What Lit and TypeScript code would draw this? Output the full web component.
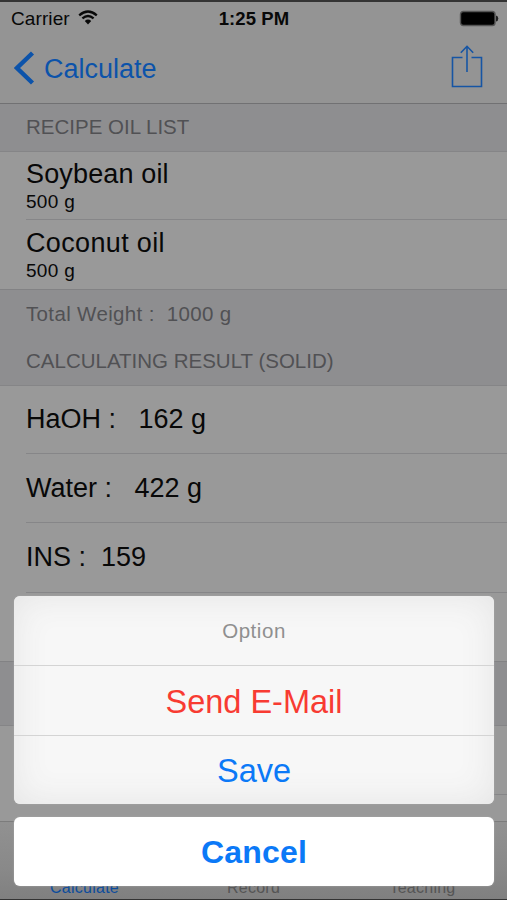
import { LitElement, html, css } from "lit";
import { customElement } from "lit/decorators.js";

@customElement("app-root")
export class AppRoot extends LitElement {
  static styles = css`
    :host {
      display: block;
      position: relative;
      width: 507px;
      height: 900px;
      overflow: hidden;
      box-sizing: border-box;
      font-family: "Liberation Sans", Arial, sans-serif;
      background: #999;
      color: #080808;
    }
    .screen {
      display: flex;
      flex-direction: column;
      height: 900px;
      box-sizing: border-box;
      border-top: 2px solid #343434;
      border-bottom: 1px solid #343434;
    }
    .top {
      height: 102px;
      box-sizing: border-box;
      flex: none;
      background: #949494;
      border-bottom: 1px solid #717173;
    }
    .status {
      display: grid;
      grid-template-columns: 1fr auto 1fr;
      align-items: center;
      height: 33px;
      padding: 0 8px 0 11px;
      font-size: 19px;
    }
    .carrier { display: flex; align-items: center; gap: 8px; letter-spacing: 0.1px; }
    .carrier svg { margin-bottom: 2px; }
    .time { font-weight: bold; font-size: 18.5px; letter-spacing: 0.1px; padding-right: 2px; }
    .battery { justify-self: end; }
    .nav {
      display: flex;
      align-items: center;
      justify-content: space-between;
      height: 68px;
      padding: 0 24px 2px 14px;
      box-sizing: border-box;
    }
    .back {
      display: flex;
      align-items: center;
      gap: 9px;
      font-size: 27px;
      color: #0c53aa;
    }
    .back span { padding-top: 2px; }
    .share { margin-bottom: 4px; }
    svg { display: block; }
    .group {
      flex: none;
      box-sizing: border-box;
      background: #8e8e90;
      border-bottom: 1px solid #858587;
      color: #515154;
      font-size: 20.5px;
      padding-left: 26px;
    }
    .line { display: flex; align-items: center; height: 47px; padding-bottom: 1px; box-sizing: border-box; white-space: pre; }
    .total { letter-spacing: 0.35px; height: 48px; }
    .mid { border-top: 1px solid #828284; }
    .spacer { height: 65px; }
    .row {
      flex: none;
      box-sizing: border-box;
      margin-left: 26px;
      border-bottom: 1px solid #868688;
      font-size: 27px;
      display: flex;
      flex-direction: column;
      justify-content: center;
      white-space: pre;
    }
    .h68 { height: 68px; }
    .h69 { height: 69px; }
    .h70 { height: 70px; }
    .last { border-bottom: 0; }
    .pair { padding-top: 4px; }
    .oil { line-height: 29px; letter-spacing: 0.15px; }
    .pair.last .oil { letter-spacing: 0.35px; }
    .sub { font-size: 19px; line-height: 26px; letter-spacing: 0.3px; }
    .tabs {
      flex: 1;
      margin-top: 26px;
      display: grid;
      grid-template-columns: repeat(3, 1fr);
      align-items: end;
      text-align: center;
      border-top: 1px solid #7c7c7c;
      background: linear-gradient(#919191, #898989 60%, #808080);
      font-size: 16px;
      line-height: 22px;
      color: #555;
      letter-spacing: 0.25px;
    }
    .on { color: #0c4c9c; }
    .overlay {
      position: absolute;
      left: 14px;
      right: 13px;
      top: 596px;
      display: flex;
      flex-direction: column;
      gap: 13px;
      text-align: center;
      color: #0b79f7;
    }
    .sheet, .cancel { border-radius: 6px; overflow: hidden; }
    .sheet {
      background: #f7f7f7;
      box-shadow: inset 0 0 34px 1px #e5e5e5, 0 0 2px #aaa;
    }
    .item {
      height: 70px;
      box-sizing: border-box;
      display: flex;
      align-items: center;
      justify-content: center;
      border-bottom: 1px solid #d4d4d4;
      font-size: 32.5px;
      padding-top: 3px;
    }
    .title { font-size: 20.5px; color: #8f8f8f; letter-spacing: 0.55px; padding-top: 0; }
    .send { color: #f83b32; }
    .save { border-bottom: 0; height: 68px; }
    .cancel {
      height: 69px;
      box-sizing: border-box;
      padding-top: 2px;
      display: flex;
      align-items: center;
      justify-content: center;
      background: #fff;
      font-size: 32px;
      letter-spacing: 0.2px;
      font-weight: bold;
      box-shadow: 0 0 2px #aaa;
    }
  `;

  render() {
    const oils = [
      { name: "Soybean oil", size: "h68" },
      { name: "Coconut oil", size: "h69 last" },
    ];
    const results = [
      { text: "HaOH :   162 g", size: "h68" },
      { text: "Water :   422 g", size: "h69" },
      { text: "INS :  159", size: "h70" },
      { text: "", size: "h68 last" },
    ];
    return html`
      <div class="screen">
        <div class="top">
          <div class="status">
            <div class="carrier">
              <span>Carrier</span>
              <svg width="20" height="15" viewBox="0 0 20 15">
                <g fill="none" stroke="#090909" stroke-width="2.3">
                  <path d="M1.2 5.3Q10-2.4 18.8 5.3" />
                  <path d="M4.4 8.4Q10 3.5 15.6 8.4" />
                </g>
                <path d="M6.8 10.9Q10 8.3 13.2 10.9L10 14.4Z" fill="#090909" />
              </svg>
            </div>
            <span class="time">1:25 PM</span>
            <svg class="battery" width="40" height="17" viewBox="0 0 40 17">
              <rect x="1.5" y="1.5" width="34.5" height="14" rx="2.8" fill="#000" stroke="#555" stroke-width="1.4" />
              <path d="M37 5.5Q39.3 6 39.3 8.5T37 11.5Z" fill="#222" />
            </svg>
          </div>
          <div class="nav">
            <div class="back">
              <svg width="21" height="34" viewBox="0 0 21 34">
                <path d="M18.5 2L3 17L18.5 32" fill="none" stroke="#0c53aa" stroke-width="4.4" />
              </svg>
              <span>Calculate</span>
            </div>
            <svg class="share" width="32" height="44" viewBox="0 0 32 44">
              <path d="M11.5 13.5H1.5V42.5H30.5V13.5H20.5M16 28V2.5M9.8 8.8L16 2.3L22.2 8.8" fill="none" stroke="#1655a4" stroke-width="1.6" />
            </svg>
          </div>
        </div>
        <div class="group"><div class="line">RECIPE OIL LIST</div></div>
        ${oils.map(
          (o) => html`<div class="row pair ${o.size}"><span class="oil">${o.name}</span><span class="sub">500 g</span></div>`
        )}
        <div class="group mid">
          <div class="line total">Total Weight :  1000 g</div>
          <div class="line">CALCULATING RESULT (SOLID)</div>
        </div>
        ${results.map((r) => html`<div class="row ${r.size}">${r.text}</div>`)}
        <div class="group mid spacer"></div>
        <div class="row h69"></div>
        <div class="tabs"><span class="on">Calculate</span><span>Record</span><span>Teaching</span></div>
      </div>
      <div class="overlay">
        <div class="sheet">
          <div class="item title">Option</div>
          <div class="item send">Send E-Mail</div>
          <div class="item save">Save</div>
        </div>
        <div class="cancel">Cancel</div>
      </div>
    `;
  }
}
